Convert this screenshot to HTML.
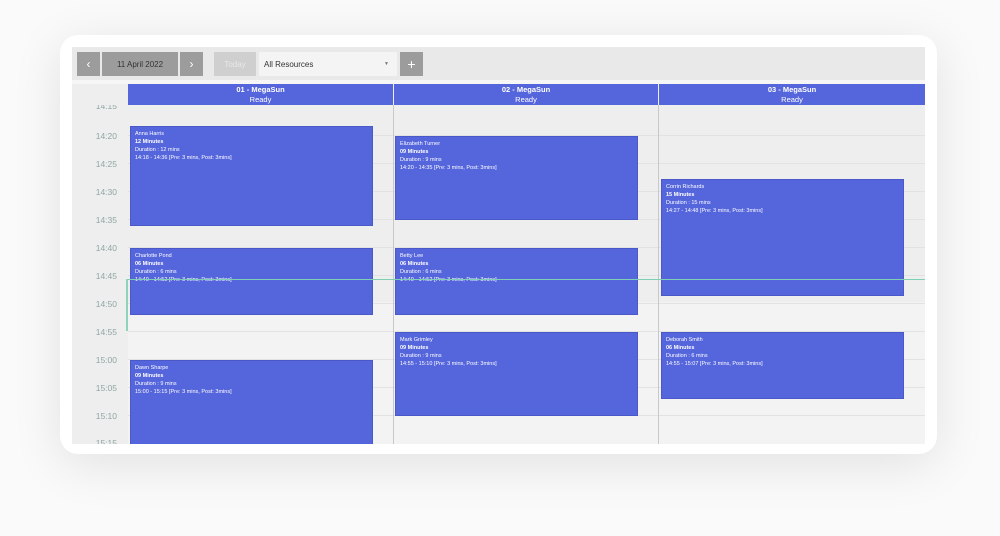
<!DOCTYPE html><html><head><style>
*{margin:0;padding:0;box-sizing:border-box}
body{width:1000px;height:536px;background:#fafafa;font-family:"Liberation Sans",sans-serif;position:relative;overflow:hidden}
.card{position:absolute;left:60px;top:35px;width:877px;height:419px;background:#fff;border-radius:18px;box-shadow:0 10px 50px rgba(0,0,0,.10)}
.app{position:absolute;left:72px;top:47px;width:853px;height:397px;background:#eeeeee;overflow:hidden}
.tb{position:absolute;height:24px;top:5px;background:#9c9c9c;color:#fff;font-size:8px;display:flex;align-items:center;justify-content:center}
.hdr{position:absolute;top:37px;height:21px;background:#5565dc;color:#fff;text-align:center;font-size:7.5px;line-height:10px;padding-top:1px;z-index:2}
.t{position:absolute;left:0;width:45px;text-align:right;font-size:8.5px;color:#8fa5a3}
.ln{position:absolute;left:56px;right:0;height:1px;background:#e2e2e2}
.ev{position:absolute;background:#5565dc;color:#fff;font-size:5.5px;line-height:8px;padding:3px 4px;border:1px solid #4b58c8}
.ev b{font-weight:bold}
.vl{position:absolute;top:58px;bottom:0;width:1px;background:#c8c8c8}
</style></head><body>
<div class="card"></div>
<div class="app">
<div style="position:absolute;left:0;top:0;right:0;height:33px;background:#e9e9e9"></div>
<div class="tb" style="left:5px;width:23px;font-size:12px">‹</div>
<div class="tb" style="left:30px;width:76px;color:#333">11 April 2022</div>
<div class="tb" style="left:108px;width:23px;font-size:12px">›</div>
<div class="tb" style="left:142px;width:42px;background:#cfcfcf;color:#e8e8e8">Today</div>
<div class="tb" style="left:187px;width:138px;background:#f4f4f4;color:#333;justify-content:flex-start;padding-left:5px">All Resources<span style="position:absolute;right:8px;font-size:5px;color:#777">▼</span></div>
<div class="tb" style="left:328px;width:23px;font-size:14px">+</div>
<div style="position:absolute;left:0;top:33px;right:0;height:4px;background:#f6f6f6"></div>
<div style="position:absolute;left:0;top:37px;width:56px;height:21px;background:#eeeeee;z-index:2"></div>
<div class="hdr" style="left:56px;width:265px"><b>01 - MegaSun</b><br>Ready</div>
<div class="hdr" style="left:322px;width:264px"><b>02 - MegaSun</b><br>Ready</div>
<div class="hdr" style="left:587px;width:266px"><b>03 - MegaSun</b><br>Ready</div>
<div style="position:absolute;left:56px;top:255px;width:797px;height:142px;background:#f3f3f3"></div>
<div class="t" style="top:54px">14:15</div>
<div class="t" style="top:84px">14:20</div><div class="ln" style="top:88px"></div>
<div class="t" style="top:112px">14:25</div><div class="ln" style="top:116px"></div>
<div class="t" style="top:140px">14:30</div><div class="ln" style="top:144px"></div>
<div class="t" style="top:168px">14:35</div><div class="ln" style="top:172px"></div>
<div class="t" style="top:196px">14:40</div><div class="ln" style="top:200px"></div>
<div class="t" style="top:224px">14:45</div><div class="ln" style="top:228px"></div>
<div class="t" style="top:252px">14:50</div><div class="ln" style="top:256px"></div>
<div class="t" style="top:280px">14:55</div><div class="ln" style="top:284px"></div>
<div class="t" style="top:308px">15:00</div><div class="ln" style="top:312px"></div>
<div class="t" style="top:336px">15:05</div><div class="ln" style="top:340px"></div>
<div class="t" style="top:364px">15:10</div><div class="ln" style="top:368px"></div>
<div class="t" style="top:391px">15:15</div>
<div class="vl" style="left:321px"></div><div class="vl" style="left:586px"></div>
<div class="ev" style="left:58px;top:79px;width:243px;height:100px">Anna Harris<br><b>12 Minutes</b><br>Duration : 12 mins<br>14:18 - 14:36 [Pre: 3 mins, Post: 3mins]</div>
<div class="ev" style="left:58px;top:201px;width:243px;height:67px">Charlotte Pond<br><b>06 Minutes</b><br>Duration : 6 mins<br>14:40 - 14:52 [Pre: 3 mins, Post: 3mins]</div>
<div class="ev" style="left:58px;top:313px;width:243px;height:90px">Dawn Sharpe<br><b>09 Minutes</b><br>Duration : 9 mins<br>15:00 - 15:15 [Pre: 3 mins, Post: 3mins]</div>
<div class="ev" style="left:323px;top:89px;width:243px;height:84px">Elizabeth Turner<br><b>09 Minutes</b><br>Duration : 9 mins<br>14:20 - 14:35 [Pre: 3 mins, Post: 3mins]</div>
<div class="ev" style="left:323px;top:201px;width:243px;height:67px">Betty Lee<br><b>06 Minutes</b><br>Duration : 6 mins<br>14:40 - 14:52 [Pre: 3 mins, Post: 3mins]</div>
<div class="ev" style="left:323px;top:285px;width:243px;height:84px">Mark Grimley<br><b>09 Minutes</b><br>Duration : 9 mins<br>14:55 - 15:10 [Pre: 3 mins, Post: 3mins]</div>
<div class="ev" style="left:589px;top:132px;width:243px;height:117px">Corrin Richards<br><b>15 Minutes</b><br>Duration : 15 mins<br>14:27 - 14:48 [Pre: 3 mins, Post: 3mins]</div>
<div class="ev" style="left:589px;top:285px;width:243px;height:67px">Deborah Smith<br><b>06 Minutes</b><br>Duration : 6 mins<br>14:55 - 15:07 [Pre: 3 mins, Post: 3mins]</div>
<div style="position:absolute;left:55px;top:232px;right:0;height:1px;background:#7fcfb2"></div>
<div style="position:absolute;left:54px;top:232px;width:2px;height:52px;background:#8fd3bb"></div>
</div>
</body></html>
